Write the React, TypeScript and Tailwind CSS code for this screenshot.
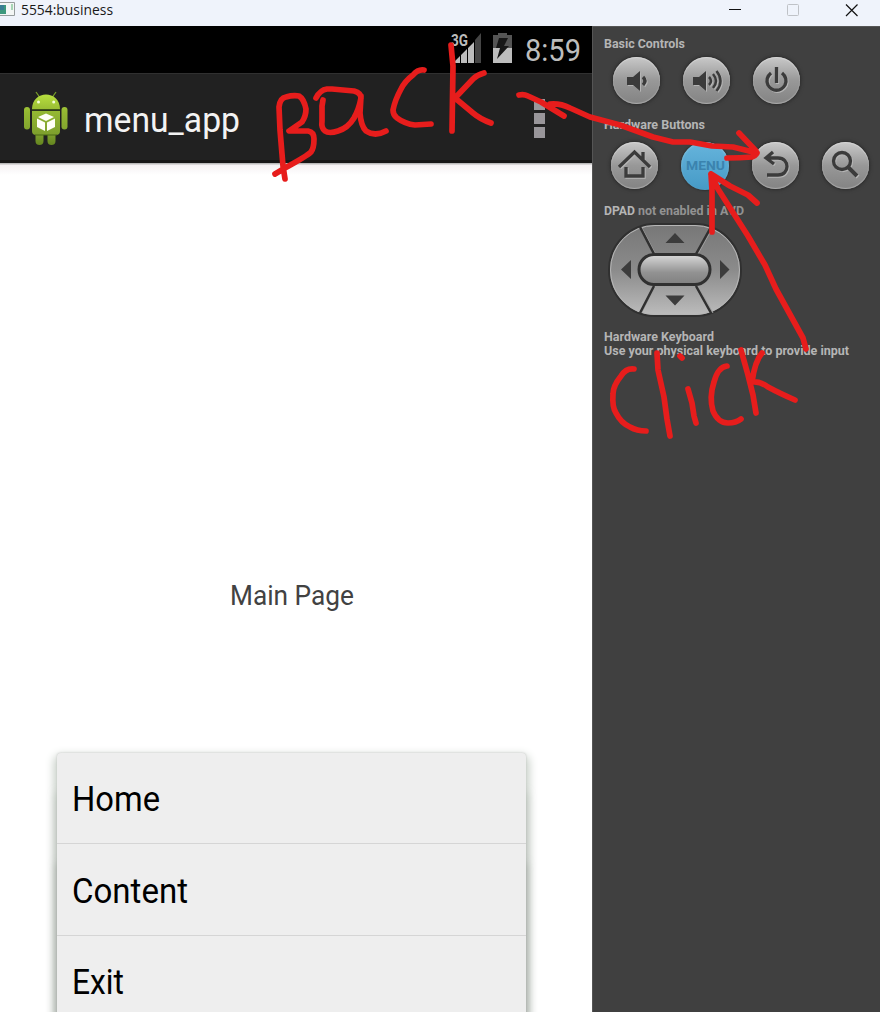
import React, { useId } from 'react';

function Label({ children, width, className }: { children: string; width: number; className: string }) {
  return (
    <svg width={width} height="1em" overflow="visible" className={`block shrink-0 ${className}`}>
      <text x="0" y="0.85em" textLength={width} lengthAdjust="spacingAndGlyphs" fill="currentColor">{children}</text>
    </svg>
  );
}

function RoundButton({ children }: { children: React.ReactNode }) {
  return (
    <button className="flex size-[47px] shrink-0 items-center justify-center rounded-full bg-linear-to-b from-[#c9c9c9] via-[#989898] to-[#838383] shadow-[0_0_0_1px_#343434,0_0_3px_2px_#343434,inset_0_1px_1px_#d4d4d4,inset_0_-1px_1px_#aaa]">
      <svg width="47" height="47" viewBox="0 0 47 47" fill="none" stroke="#3b3b3b" strokeWidth="3.3" className="drop-shadow-[1px_1px_0_#b5b5b5]">{children}</svg>
    </button>
  );
}

function Android() {
  const id = useId();
  return (
    <svg width="48" height="56" viewBox="0 0 48 56" className="shrink-0">
      <defs>
        <linearGradient id={id} gradientUnits="userSpaceOnUse" x1="0" x2="0" y1="3" y2="54">
          <stop offset="0" stopColor="#b9e03f" /><stop offset=".35" stopColor="#94b832" /><stop offset=".8" stopColor="#7d9f2d" /><stop offset="1" stopColor="#64851f" />
        </linearGradient>
      </defs>
      <g fill={`url(#${id})`}>
        <path d="M14 1l3.500 5M34 1l-3.500 5" stroke="#779d29" strokeWidth="1.3" />
        <path d="M10 18C10 -1.500 38 -1.500 38 18Z" />
        <path d="M10 20h28v20q0 4-4 4H14q-4 0-4-4z" />
        <rect x="2" y="16" width="6" height="22.500" rx="3" />
        <rect x="39.500" y="16" width="6" height="22.500" rx="3" />
        <path d="M13.500 44h8v6a4 4 0 0 1-8 0zM25.500 44h8v6a4 4 0 0 1-8 0z" />
      </g>
      <path d="M10 18.800h28M13 44h22" stroke="#4a6915" strokeWidth="1" />
      <circle cx="16.500" cy="11" r="1.500" fill="#f4ffda" /><circle cx="31.700" cy="11" r="1.500" fill="#f4ffda" />
      <path d="M24 22.500l8 3.500-8 4-8-4zM15 27.500l8 4v8.500l-8-4zM33 27.500v8.500l-8 4v-8.500z" fill="#fffff6" />
    </svg>
  );
}

function DPad() {
  return (
    <svg width="134" height="94" viewBox="0 0 134 94" className="block">
      <defs>
        <linearGradient id="pad" x1="0" x2="0" y1="0" y2="1">
          <stop offset="0" stopColor="#777" /><stop offset=".5" stopColor="#8b8b8b" /><stop offset="1" stopColor="#bdbdbd" />
        </linearGradient>
        <linearGradient id="center" x1="0" x2="0" y1="0" y2="1">
          <stop stopColor="#dadada" /><stop offset=".6" stopColor="#929292" /><stop offset="1" stopColor="#808080" />
        </linearGradient>
      </defs>
      <rect x="1" y="1" width="132" height="92" rx="46" fill="url(#pad)" stroke="#303030" strokeWidth="2" />
      <rect x="2.500" y="2.500" width="129" height="89" rx="44.500" fill="none" stroke="#b6b6b6" strokeWidth="1" />
      <path d="M33.500 4l14 27M105 4L90 31M33.500 90l14-27M105 90L90 63" stroke="#a0a0a0" strokeWidth="1" />
      <path d="M32 4l14 27M103 4L88 31M32 90l14-27M103 90L88 63" stroke="#303030" strokeWidth="2.500" />
      <rect x="31" y="31.500" width="71" height="30" rx="15" fill="url(#center)" stroke="#303030" strokeWidth="3" />
      <path d="M57.500 20h19L67 10zM57.500 72.500h19L67 82.500zM23 37v19l-10-9.500zM112 37v19l9.500-9.500z" fill="#3c3c3c" />
    </svg>
  );
}

function Ink() {
  return (
    <svg className="pointer-events-none absolute inset-0" width="880" height="1012" viewBox="0 0 880 1012" fill="none" stroke="#e71d1c" strokeWidth="5.7" strokeLinecap="round" strokeLinejoin="round">
      <path d="M285 179L283 166 280 130 279 107Q280 98 286 97 293 95 299 96 304 99 306 109 306 116 302 122L289 131 308 131Q314 132 314 139 314 148 311 152 307 156 285 168L275 174" />
      <path d="M316 98Q320 90 327 89L332 89 354 91Q361 93 361 98 359 109 354 118 348 128 338 131 329 134 325 131 321 128 322 121L322 106 323 100M361 96L360 113Q361 126 366 131 375 137 386 131" />
      <path d="M424 70Q418 69 413 75 405 81 401 89 395 100 393 110 393 115 397 118 405 124 415 125L431 124M451 45L453 66 452 131M484 73Q477 75 473 79L455 98 473 113Q480 119 491 123" />
      <path d="M519 95Q524 94 528 96L541 102 564 116M550 104Q560 103 570 108L590 117 620 125 653 137 673 142 690 142 712 146 733 147 757 153M739 133L756 151Q758 155 752 157 740 158 727 158" />
      <path d="M711 174L712 190 712 232M711 174L718 189 748 236 765 265 776 289 803 338 806 349M711 174L730 186 748 195 757 203" />
      <path d="M634 369Q626 368 621 376 613 386 613 394 612 407 616 413 621 423 630 427 637 431 646 431M657 353L658 370 664 397 667 419 670 436M688 389L692 403 694 416 696 423M680 356L682 358M727 366Q718 367 714 382 709 397 713 411 718 423 728 423 736 423 741 419" />
      <path d="M741 350L748 375 753 395 756 413M762 353Q755 361 752 382 760 381 768 387 779 393 795 400" />
    </svg>
  );
}

export default function App() {
  return (
    <div className="relative flex h-[1012px] w-[880px] flex-col overflow-hidden bg-white font-['Roboto',sans-serif]">
      <header className="flex h-[26px] shrink-0 items-center justify-between bg-[#eff3fb]">
        <div className="flex h-full items-center gap-[6px] pb-[8px]">
          <svg width="15" height="16" viewBox="0 0 15 16">
            <path d="M0 1.500h14.500v13H0" fill="#f3f6f5" stroke="#969c9d" />
            <path d="M0 4h6v9H0z" fill="#3d987d" /><path d="M0 4h4v5H0z" fill="#397e94" /><path d="M12 3v6" stroke="#5ab476" />
          </svg>
          <Label width={92} className="mt-[1px] font-['Open_Sans',sans-serif] text-[14px] text-[#191919]">5554:business</Label>
        </div>
        <svg width="160" height="26" viewBox="0 0 160 26" fill="none">
          <path d="M9 9.500h12" stroke="#111" /><rect x="67.500" y="4.500" width="11" height="11" rx="1" stroke="#bfc2c7" />
          <path d="M126 4.500l11.500 11.500M137.500 4.500L126 16" stroke="#111" strokeWidth="1.200" />
        </svg>
      </header>
      <main className="flex min-h-0 flex-1">
        <section className="flex w-[592px] shrink-0 flex-col overflow-hidden">
          <div className="flex h-[47px] shrink-0 items-center justify-end bg-black pr-[11px]">
            <svg width="73" height="40" viewBox="0 0 73 40" className="mb-[7px] mr-[-1px]">
              <text x="9" y="20" fontSize="16" fontWeight="700" fill="#bbb" textLength="17" lengthAdjust="spacingAndGlyphs">3G</text>
              <path d="M12 37v-1l6-6v7zM19 37v-8l6-6v14zM26 37V22l6-6v21z" fill="#bcbcbc" /><path d="M33 37V14l6-7v30z" fill="#454545" />
              <path d="M51 9h5V7h9v2h5v28H51z" fill="#555" /><path d="M51 22h19v15H51z" fill="#bdbdbd" /><path d="M57 12h9l-4 8h5L55 33l3-11h-4z" fill="#171717" />
            </svg>
            <Label width={56} className="ml-[11px] mt-[1px] text-[32px] text-[#bdbdbd]">8:59</Label>
          </div>
          <div className="flex h-[90px] shrink-0 items-center border-t border-[#303030] bg-[#212121] pl-[22px] shadow-[inset_0_-3px_0_#171717]">
            <Android />
            <Label width={156} className="ml-[14px] mt-[1px] text-[35px] text-[#f3f3f3]">menu_app</Label>
            <div className="ml-auto mr-[47px] flex flex-col gap-[3px]"><i className="size-[11px] bg-[#99969a]" /><i className="size-[11px] bg-[#99969a]" /><i className="size-[11px] bg-[#99969a]" /></div>
          </div>
          <div className="h-[12px] shrink-0 bg-linear-to-b from-[#aaa] via-[#f5f2f4] via-20% to-white" />
          <div className="flex min-h-0 flex-1 flex-col">
            <div className="flex h-[578px] shrink-0 justify-center pr-[8px] pt-[407px]"><Label width={124} className="text-[27px] text-[#424242]">Main Page</Label></div>
            <div className="ml-[57px] w-[469px] shrink-0 rounded-t-sm bg-[#eee] shadow-[0_110px_8px_#8d938d90,0_40px_10px_#a0a8a090,0_5px_10px_3px_#c5cdc5,0_0_2px_#bbb]">
              <div className="flex h-[91px] items-center border-b border-[#d5d5d5] pl-[15px] pt-[1px]"><Label width={88} className="text-[35px] text-black">Home</Label></div>
              <div className="flex h-[92px] items-center border-b border-[#d5d5d5] pl-[15px] pt-[1px]"><Label width={116} className="text-[35px] text-black">Content</Label></div>
              <div className="flex h-[92px] items-center pl-[15px]"><Label width={52} className="mb-[2px] text-[35px] text-black">Exit</Label></div>
            </div>
          </div>
        </section>
        <aside className="flex min-w-0 flex-1 flex-col border-l border-t border-[#555] bg-[#404040] pl-[11px] text-[#b5b5b5]">
          <Label width={81} className="mt-[11px] text-[12px] font-bold">Basic Controls</Label>
          <div className="ml-[9px] mt-[7px] flex gap-[23px]">
            <RoundButton><path d="M14 20h6l7-6v20l-7-6h-6z" fill="#3b3b3b" stroke="none" /><path d="M30 20q4 4 0 8" /></RoundButton>
            <RoundButton><path d="M10 20h6l7-6v20l-7-6h-6z" fill="#3b3b3b" stroke="none" /><path d="M26 20q4 4 0 8M30 17q6 7 0 14M33.500 14q8 10 0 20" strokeWidth="2.500" /></RoundButton>
            <RoundButton><path d="M18 16q-6 5-3 12c4 7 13 7 17 0q3-7-3-12M23.500 10v16" /></RoundButton>
          </div>
          <Label width={101} className="mt-[15px] text-[12px] font-bold">Hardware Buttons</Label>
          <div className="ml-[7px] mt-[11px] flex gap-[23px]">
            <RoundButton><path d="M8 25L23.500 10 39 25M15 25v9h17v-9M32 18v-8" /></RoundButton>
            <button className="flex size-[48px] shrink-0 items-center justify-center rounded-full bg-linear-to-b from-[#66b4dc] to-[#459ac6] shadow-[0_0_2px_1px_#303030,inset_0_1px_2px_#86c4df]"><Label width={39} className="text-[13.5px] font-bold text-[#3b83ae]">MENU</Label></button>
            <RoundButton><path d="M21 10l-7 6 8 6M15 16h11c12 0 12 17 0 17H15" /></RoundButton>
            <RoundButton><circle cx="20" cy="19" r="8.500" /><path d="M26 25l9 9" strokeWidth="4" /></RoundButton>
          </div>
          <div className="mt-[15px] flex gap-[3px]"><Label width={31} className="text-[12px] font-bold">DPAD</Label><Label width={106} className="text-[12px] font-bold text-[#929292]">not enabled in AVD</Label></div>
          <div className="ml-[4px] mt-[6px]"><DPad /></div>
          <Label width={110} className="mt-[14px] text-[12px] font-bold">Hardware Keyboard</Label>
          <Label width={245} className="mt-[2px] text-[12px] font-bold">Use your physical keyboard to provide input</Label>
        </aside>
      </main>
      <Ink />
    </div>
  );
}
